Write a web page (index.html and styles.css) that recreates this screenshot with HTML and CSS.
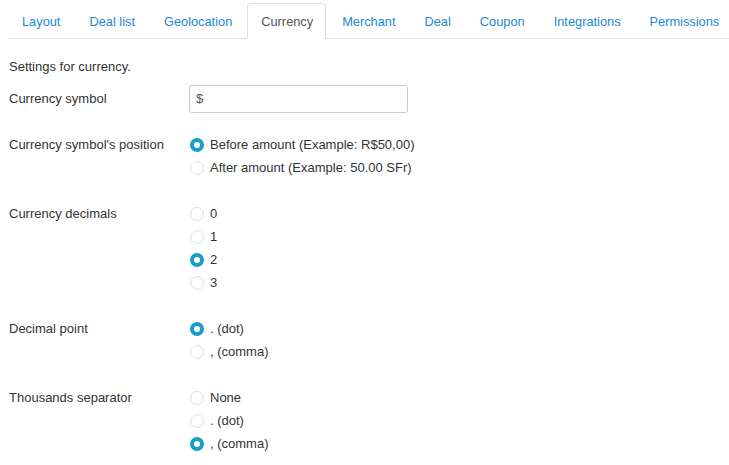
FILE: index.html
```html
<!DOCTYPE html>
<html>
<head>
<meta charset="utf-8">
<link rel="stylesheet" href="styles.css">
</head>
<body>
<ul class="tabs">
  <li class="tab"><a>Layout</a></li>
  <li class="tab"><a>Deal list</a></li>
  <li class="tab"><a>Geolocation</a></li>
  <li class="tab active"><a>Currency</a></li>
  <li class="tab"><a>Merchant</a></li>
  <li class="tab"><a>Deal</a></li>
  <li class="tab"><a>Coupon</a></li>
  <li class="tab"><a>Integrations</a></li>
  <li class="tab"><a>Permissions</a></li>
</ul>
<p class="intro">Settings for currency.</p>
<div class="form">
  <div class="row row-input">
    <div class="label">Currency symbol</div>
    <div class="control"><div class="input">$</div></div>
  </div>
  <div class="row">
    <div class="label">Currency symbol's position</div>
    <div class="control">
      <div class="radio"><span class="dot on"></span>Before amount (Example: R$50,00)</div>
      <div class="radio"><span class="dot"></span>After amount (Example: 50.00 SFr)</div>
    </div>
  </div>
  <div class="row">
    <div class="label">Currency decimals</div>
    <div class="control">
      <div class="radio"><span class="dot"></span>0</div>
      <div class="radio"><span class="dot"></span>1</div>
      <div class="radio"><span class="dot on"></span>2</div>
      <div class="radio"><span class="dot"></span>3</div>
    </div>
  </div>
  <div class="row">
    <div class="label">Decimal point</div>
    <div class="control">
      <div class="radio"><span class="dot on"></span>. (dot)</div>
      <div class="radio"><span class="dot"></span>, (comma)</div>
    </div>
  </div>
  <div class="row">
    <div class="label">Thousands separator</div>
    <div class="control">
      <div class="radio"><span class="dot"></span>None</div>
      <div class="radio"><span class="dot"></span>. (dot)</div>
      <div class="radio"><span class="dot on"></span>, (comma)</div>
    </div>
  </div>
</div>
</body>
</html>
```
FILE: styles.css
```css
html, body {
  background: #fff;
}
body {
  margin: 0;
  padding: 3px 0 0 8px;
  font-family: "Liberation Sans", Arial, sans-serif;
  font-size: 13px;
  color: #333;
  overflow: hidden;
}
.tabs {
  list-style: none;
  margin: 0;
  padding: 0;
  display: flex;
  border-bottom: 1px solid #ddd;
  height: 35px;
  white-space: nowrap;
  font-size: 12.8px;
}
.tab {
  margin-right: 2px;
  margin-bottom: -1px;
}
.tab a {
  display: block;
  height: 34px;
  line-height: 36px;
  padding: 0 12px 0 13px;
  color: #1d8ad3;
  border: 1px solid transparent;
  border-bottom: 0;
  border-radius: 4px 4px 0 0;
}
.tab.active a {
  color: #555;
  background: #fff;
  border-color: #ddd;
  height: 35px;
}
.intro {
  margin: 19px 0 0 1px;
  line-height: 18px;
}
.form {
  margin-top: 9px;
  display: flex;
  flex-direction: column;
  gap: 23px;
}
.row {
  display: grid;
  grid-template-columns: 180px 1fr;
  padding-left: 1px;
}
.row-input {
  margin-bottom: -3px;
}
.row-input .label {
  line-height: 28px;
}
.label {
  line-height: 23px;
}
.input {
  width: 205px;
  height: 26px;
  line-height: 26px;
  border: 1px solid #ccc;
  border-radius: 3px;
  padding: 0 6px;
  color: #555;
}
.radio {
  display: flex;
  align-items: center;
  line-height: 23px;
  height: 23px;
}
.dot {
  box-sizing: border-box;
  width: 14px;
  height: 14px;
  border-radius: 50%;
  border: 1px solid #ddd;
  margin: 0 6px 0 1px;
  background: #fff;
  flex: none;
}
.dot.on {
  border: 4px solid #1a9dc8;
  background: #fff;
}
```
